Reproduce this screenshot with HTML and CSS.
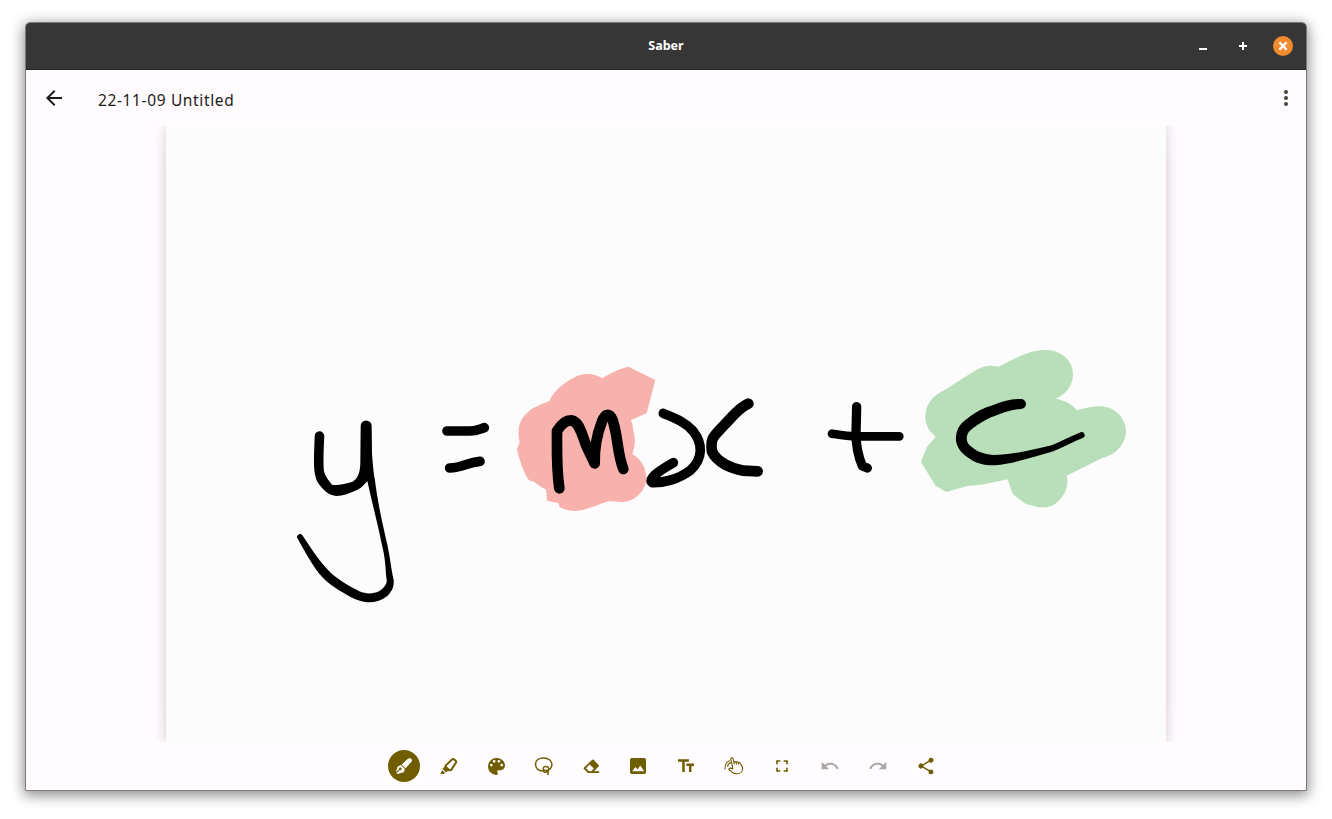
FILE: index.html
```html
<!DOCTYPE html>
<html lang="en">
<head>
<meta charset="utf-8">
<title>Saber</title>
<link rel="stylesheet" href="styles.css">
</head>
<body>
<main class="window">
  <header class="titlebar">
    <span></span>
    <h1 class="titlebar-name">Saber</h1>
    <div class="window-controls">
      <button class="control" aria-label="Minimize"><svg width="8" height="8" viewBox="0 0 8 8"><path d="M0 6h8v2H0z"/></svg></button>
      <button class="control" aria-label="Maximize"><svg width="8" height="8" viewBox="0 0 8 8"><path d="M3 0h2v3h3v2H5v3H3V5H0V3h3z"/></svg></button>
      <button class="control close" aria-label="Close"><svg width="8" height="8" viewBox="0 0 8 8"><path class="cross" d="M.4.4l7.200 7.200M7.600.4L.4 7.600"/></svg></button>
    </div>
  </header>
  <nav class="appbar">
    <button class="icon-button" aria-label="Back"><svg width="24" height="24" viewBox="0 0 24 24"><path d="M20 11H7.830l5.590-5.590L12 4l-8 8 8 8 1.410-1.410L7.830 13H20z"/></svg></button>
    <h2 class="note-title">22-11-09 Untitled</h2>
    <button class="icon-button more" aria-label="More"><svg width="24" height="24" viewBox="0 0 24 24"><circle cx="12" cy="6" r="2"/><circle cx="12" cy="12" r="2"/><circle cx="12" cy="18" r="2"/></svg></button>
  </nav>
  <section class="workspace">
    <div class="page">
      <svg class="ink" viewBox="166 126 1000 616" width="1000" height="616">
        <g transform="translate(505 355) scale(.33333)">
          <path class="red" d="M133 138C148 103 184 78 218 62C244 54 269 56 290 69C310 61 332 43 370 35L451 75L425 175L378 195C385 210 383 224 388 240C392 262 388 280 382 298C406 312 425 337 424 372C421 411 388 439 354 441C338 442 325 439 311 439C281 448 248 465 211 468C194 468 179 463 164 457L161 445L126 437L123 403C109 399 98 387 87 380L72 376C58 357 46 327 36 283L44 261C35 226 42 192 73 168C90 154 115 145 133 138Z"/>
        </g>
        <g transform="translate(910 340) scale(.33333)">
          <path class="green" d="M265 80C290 69 333 42 376 33C401 29 424 26 449 40C477 56 489 78 489 106C486 140 467 165 436 176C462 180 484 190 501 211C524 205 544 199 570 199C617 200 648 235 648 276C646 317 611 347 575 355L470 407C476 432 469 457 452 476C432 501 404 506 381 501L346 491L308 462L293 418C255 425 219 437 174 437L109 456L77 437L33 367L50 322L77 290C58 274 46 255 46 230C46 196 66 171 91 157C128 138 164 109 203 88C222 78 243 75 265 80Z"/>
        </g>
        <g transform="translate(280 400) scale(.33333)">
          <path d="M104 109A14.5 14.5 0 0 1 133 108C131 140 129 190 132 214C136 230 149 246 156 254C174 258 194 251 218 245C234 236 241 216 241 187L242 78A16.500 16.500 0 0 1 275 78L276 160C278 190 281 220 284 235C292 300 307 370 321 430C331 475 334 510 341 540C343 560 335 575 322 588C305 602 285 608 262 607C230 602 210 590 190 578C165 563 145 551 126 530C100 502 75 455 53 416A8.500 8.500 0 0 1 67 406C90 439 115 482 150 516C175 540 205 556 238 574C258 583 280 582 297 574C312 564 322 550 320 540C316 510 317 480 308 445C293 370 279 320 262 243C248 261 237 268 222 274C205 281 190 288 170 288C145 287 130 270 115 250C100 225 102 190 102 165Z"/>
          <path class="line w29" d="M501 93L570 93C590 93 600 87 613 83"/>
          <path class="line w29" d="M509 204C548 204 560 187 600 184"/>
        </g>
        <g transform="translate(505 355) scale(.33333)">
          <path class="line w32" d="M163 400C154 340 156 290 156 228C170 205 182 196 198 196C225 199 230 240 245 275L269 325C268 270 277 235 290 202C302 168 320 174 327 210C339 252 338 300 355 342"/>
        </g>
        <g transform="translate(635 390) scale(.33333)">
          <path class="line w29" d="M85 70C118 84 150 95 174 123C204 160 205 206 166 241C130 268 85 279 52 278C38 268 68 244 115 218"/>
          <path class="line w32" d="M340 41C307 56 289 85 265 108C235 139 225 145 231 185C247 218 289 236 325 242L368 244"/>
        </g>
        <g transform="translate(815 390) scale(.33333)">
          <path class="line w28" d="M125 50L123 130C123 165 130 200 142 228L157 234"/>
          <path class="line w26" d="M51 131C75 135 95 139 125 139L253 139"/>
        </g>
        <g transform="translate(910 340) scale(.33333)">
          <path d="M333 177A15 15 0 0 1 333 207C300 208 270 222 243 232C215 246 190 262 176 276C168 290 168 305 178 315C195 330 215 343 250 345C300 345 370 330 425 316C455 304 485 288 512 277A9 9 0 0 1 518 294C490 305 460 322 430 334C370 350 310 372 255 376C215 376 195 368 170 350C145 332 136 310 138 290C140 262 155 247 175 233C200 214 220 204 250 195C280 182 305 177 333 177Z"/>
        </g>
      </svg>
    </div>
  </section>
  <footer class="toolbar">
    <button class="tool selected" aria-label="Fountain pen"><svg width="16" height="16" viewBox="0 0 16 16"><path d="M9.200 3.300L12.200.6C13 0 14.500-.1 15.300.7s.9 2.200.2 3.100l-6 6.400-3.800-3.700zM5 7.100l3.900 3.800-1.200 3.300L1.400 16l-.8-.8 3.200-3.200a1.300 1.300 0 1 0-.8-.8L-.1 14.400l1.800-6z"/></svg></button>
    <button class="tool narrow shift-more" aria-label="Highlighter"><svg width="18" height="18" viewBox="0 0 18 18"><path class="outline thick" d="M5.800 8.400L12.100 2.400q1-.7 1.900 0l1.800 1.400q.8.900.1 1.900l-4.700 7.200-2.200.4-3.300-3z"/><path d="M5.300 8.200l5 4.700-2.600 1.200-1.500 1.400-3.800-3.700L4.100 10.200zM2.200 13.300l2.700 2.300L4 17H.3z"/></svg></button>
    <button class="tool narrow shift" aria-label="Color"><svg width="17" height="17" viewBox="3 3 18 18"><path d="M12 3a9 9 0 0 0 0 18c.83 0 1.500-.67 1.500-1.500 0-.39-.15-.74-.39-1.010-.23-.26-.38-.61-.38-.99 0-.83.67-1.500 1.500-1.500H16c2.760 0 5-2.240 5-5 0-4.420-4.030-8-9-8zm-5.500 9a1.500 1.500 0 1 1 0-3 1.500 1.500 0 0 1 0 3zm3-4a1.500 1.500 0 1 1 0-3 1.500 1.500 0 0 1 0 3zm5 0a1.500 1.500 0 1 1 0-3 1.500 1.500 0 0 1 0 3zm3 4a1.500 1.500 0 1 1 0-3 1.500 1.500 0 0 1 0 3z"/></svg></button>
    <button class="tool narrow" aria-label="Lasso"><svg width="19" height="19" viewBox="0 0 19 19"><path class="outline" d="M9.300 13.500C5 14.400 1.500 11.500 1.500 7.300 1.500 3.300 5 1 9.600 1s8.300 2.500 8.300 6.500c0 3.300-2.600 5.900-5.300 6-2.400.1-3.700-1.200-3.300-2.600.4-1.500 3.100-2.100 4.700-.6 1.300 1.300.6 3.300-.9 4.400-1.200.8-2.800.5-3.800-.4m5.100-1.300l-.5 4.500"/></svg></button>
    <button class="tool shift-right" aria-label="Eraser"><svg width="17" height="18" viewBox="0 0 17 18"><path d="M9.200 2.800q.7-.6 1.400 0l5 5.200q.6.700 0 1.400L10.900 14.300h5.300V16H5L1 12q-.7-.8 0-1.500zM6.600 7.600L3 11.200l3 3.100h2.300l2.600-2.700z"/></svg></button>
    <button class="tool" aria-label="Photo"><svg width="16" height="16" viewBox="3 3 18 18"><path d="M21 19V5a2 2 0 0 0-2-2H5a2 2 0 0 0-2 2v14a2 2 0 0 0 2 2h14a2 2 0 0 0 2-2zM5.500 18l3.500-5 2.500 3 3-4.500L19 18z"/></svg></button>
    <button class="tool" aria-label="Text"><svg width="16" height="14" viewBox="2.500 4 19 16"><path d="M2.500 4v3h5v12h3V7h5V4zm19 5h-9v3h3v7h3v-7h3z"/></svg></button>
    <button class="tool" aria-label="Finger drawing"><svg width="20" height="20" viewBox="0 0 20 20"><path class="outline thin" d="M1 13C1 8.800 2.600 5.600 5.500 4.700M3.600 10.500C3.800 8.500 4.800 7.300 6.800 6.500M8.500 10.500L6.800 3.200q-.2-1.300.8-1.500t1.400 1.100l1.300 5M9.800 6q1.500-1 2.300.5l.4 1.500M12 5.900q1.500-.8 2.200.7l.4 1.400M14.200 6.600q1.500-.6 2 .7C17.700 8.900 18.600 10.500 18.600 12.400c0 3.100-2.500 5.300-5.800 5.300-2.200 0-3.500-.5-4.800-1.500L5 13.500q-.3-1.500 1.200-1.400l2.600.8-.4-2.500"/></svg></button>
    <button class="tool" aria-label="Fullscreen"><svg width="20" height="20" viewBox="0 0 24 24"><path d="M5 5h5v2H7v3H5zm9 0h5v5h-2V7h-3zM5 14h2v3h3v2H5zm12 0h2v5h-5v-2h3z"/></svg></button>
    <button class="tool disabled" aria-label="Undo"><svg width="20" height="20" viewBox="0 0 24 24"><path d="M12.500 8c-2.650 0-5.050.99-6.900 2.600L2 7v9h9l-3.620-3.620c1.390-1.160 3.160-1.880 5.120-1.880 3.540 0 6.550 2.310 7.600 5.500l2.370-.78C21.080 11.030 17.150 8 12.500 8z"/></svg></button>
    <button class="tool disabled" aria-label="Redo"><svg width="20" height="20" viewBox="0 0 24 24"><path d="M18.400 10.600C16.550 8.990 14.150 8 11.500 8c-4.650 0-8.580 3.030-9.960 7.220L3.900 16c1.050-3.190 4.050-5.500 7.600-5.500 1.950 0 3.730.72 5.120 1.880L13 16h9V7z"/></svg></button>
    <button class="tool" aria-label="Share"><svg width="20" height="20" viewBox="0 0 24 24"><path d="M18 16.100c-.76 0-1.440.3-1.960.77L8.900 12.700a3.300 3.300 0 0 0 0-1.400l7.050-4.110A3 3 0 1 0 15 5c0 .24.040.47.090.7L8.040 9.810a3 3 0 1 0 0 4.380l7.120 4.160A2.920 2.920 0 1 0 18 16.100z"/></svg></button>
  </footer>
</main>
</body>
</html>
```

FILE: styles.css
```css
* { box-sizing: border-box; }
body {
  margin: 0;
  height: 819px;
  padding: 22px 25px 28px;
  background: #fff;
  font-family: "Noto Sans", sans-serif;
  overflow: hidden;
}
button {
  display: flex;
  align-items: center;
  justify-content: center;
  padding: 0;
  border: 0;
  background: none;
  color: inherit;
}
svg { display: block; flex: none; overflow: visible; fill: currentColor; }
.window {
  width: 1282px;
  height: 769px;
  display: flex;
  flex-direction: column;
  border: 1px solid #7b7b7b;
  border-radius: 5px 5px 0 0;
  background: #fffbff;
  box-shadow: 0 3px 14px 1px rgba(0, 0, 0, .48);
  overflow: hidden;
}
.titlebar {
  height: 47px;
  flex: none;
  display: grid;
  grid-template-columns: 1fr auto 1fr;
  align-items: center;
  padding: 0 13px;
  background: #363636;
  border-bottom: 1px solid #262626;
  color: #fff;
}
.titlebar-name {
  margin: 0;
  font-size: 12.5px;
  line-height: 18px;
  font-weight: 700;
}
.window-controls { display: flex; justify-content: flex-end; gap: 20px; }
.control { width: 20px; height: 20px; }
.close { border-radius: 50%; background: #f08c2e; }
.cross { fill: none; stroke: #fff; stroke-width: 2.2; }
.appbar {
  height: 56px;
  flex: none;
  display: flex;
  align-items: center;
  padding: 0 8px 0 16px;
  color: #1e1b16;
}
.icon-button { width: 24px; height: 24px; }
.more { margin-left: auto; color: #4c463a; }
.note-title {
  margin: 4px 0 0 32px;
  font-size: 15.5px;
  line-height: 22px;
  letter-spacing: .63px;
  font-weight: 400;
}
.workspace {
  height: 616px;
  flex: none;
  display: flex;
  justify-content: center;
  overflow: hidden;
}
.page {
  width: 1000px;
  height: 616px;
  background: #fcfcfc;
  box-shadow: 0 0 12px rgba(70, 35, 45, .18), 0 30px 11px rgba(70, 35, 45, .05), 0 -30px 11px rgba(70, 35, 45, .03);
}
.ink { fill: #000; }
.red { fill: #f8b2ae; }
.green { fill: #b8dfb9; }
.line { fill: none; stroke: #000; stroke-linecap: round; stroke-linejoin: round; }
.w26 { stroke-width: 26; }
.w28 { stroke-width: 28; }
.w29 { stroke-width: 29; }
.w32 { stroke-width: 32; }
.toolbar {
  flex: 1;
  display: flex;
  align-items: center;
  justify-content: center;
  gap: 16px;
  padding-right: 2px;
  color: #6f5d00;
}
.tool { width: 32px; height: 32px; }
.tool.selected { border-radius: 50%; background: #6f5d00; color: #fff; }
.tool.disabled { color: #aaa7a8; }
.tool.narrow { width: 30px; }
.shift { padding-right: 2px; }
.shift-more { padding-right: 4px; }
.shift-right { padding-left: 3px; }
.outline { fill: none; stroke: currentColor; stroke-width: 1.5; stroke-linejoin: round; stroke-linecap: round; }
.thick { stroke-width: 2; }
.thin { stroke-width: 1.1; }
```
